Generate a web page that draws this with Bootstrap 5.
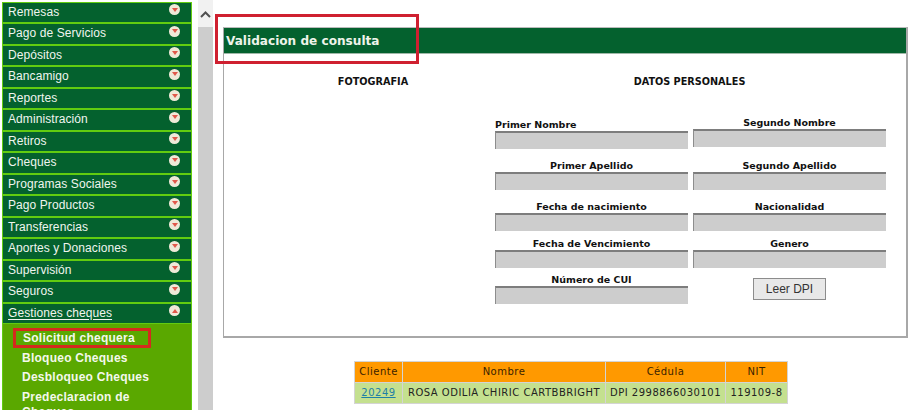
<!DOCTYPE html>
<html lang="es">
<head>
<meta charset="utf-8">
<title>Validacion de consulta</title>
<link rel="stylesheet" href="https://cdn.jsdelivr.net/npm/bootstrap@5.3.0/dist/css/bootstrap.min.css">
<style>
html,body{height:410px;overflow:hidden;background:#fff}
body{position:relative;font-family:"Liberation Sans",Arial,sans-serif}
.side-menu{width:190px;height:410px;margin-left:2px;flex:none;overflow:hidden;padding-top:1.5px}
.side-item{height:21.5px;background:#04612e;border:1px solid #62cc10;color:#f0f5ee;font-size:12px;line-height:19.5px;padding-left:5px;padding-right:11px;letter-spacing:.08px;text-decoration:none}
.side-item u{text-underline-offset:2px}
.side-dot{width:11px;height:11px;border-radius:50%;background:#efe9d8;flex:none;margin-top:1.5px;display:flex;align-items:center;justify-content:center}
.side-sub{background:#5aa800;border:1px solid #62cc10;border-top:0;padding:7px 0 0 19px;height:100px}
.side-sub a{display:block;color:#f4f8ec;font-weight:700;font-size:12px;line-height:14.5px;padding-bottom:5.2px;letter-spacing:.25px;text-decoration:none;width:135px}
.side-sub a:first-child{padding-left:1px}
.scroll-track{width:15px;height:410px;margin-left:6px;background:#cdcdcd;flex:none}
.scroll-cap{height:27px;background:#f1f1f1;display:flex;justify-content:center;padding-top:11px}
.work{margin-left:10px;width:685px;flex:none;padding-top:27px}
.panel-box{border:1px solid #a8a8a8;border-top-color:#bbb;height:311px;border-width:1px 2px 2px 1px}
.panel-head{height:26px;background:#04612e;color:#eef4ea;font:700 12.1px/27px "DejaVu Sans",Verdana,sans-serif;padding-left:2px;border-bottom:1px solid #9fb8a8}
.panel-body-wrap{padding-left:271px}
.col-title{font:700 9.7px/11px "DejaVu Sans",Verdana,sans-serif;color:#111;text-align:center}
.title-row{height:22px;padding-top:22px;box-sizing:content-box;margin-left:-271px}
.title-photo{width:298px}
.title-data{width:335px}
.field-grid{display:grid;grid-template-columns:193px 193px;column-gap:5px;margin-top:21px}
.field-cell{text-align:center}
.field-cell label{display:block;font:700 9.5px/11px "DejaVu Sans",Verdana,sans-serif;color:#111;margin:0 0 1px}
.field-in{display:block;width:193px;height:18px;background:#cdcdcd;border:0;border-top:2px solid #7d7d7d;border-left:1px solid #8d8d8d;border-radius:0;padding:0}
.rowgap{margin-bottom:11px}
.rowgap-a{margin-bottom:7px}
.rowgap-b{margin-bottom:6px}
.up2{margin-top:-2px}
.lead-left{text-align:left}
.dpi-btn{display:block;width:73px;height:22px;margin:4px 0 0 60px;padding:0;background:#e8e8e8;border:1px solid #8c8c8c;border-radius:0;font:12px/20px "Liberation Sans",Arial,sans-serif;color:#333}
.data-tbl{width:434px;margin:23px 0 0 131px;border-collapse:separate;border-spacing:1px;font:10px/1 "DejaVu Sans",Verdana,sans-serif;background:#d4d4d4;color:#222;table-layout:fixed}
.data-tbl th{background:#ff9900;font-weight:400;text-align:center;height:20px;padding:0;color:#3a2200;letter-spacing:.5px}
.data-tbl td{background:#c4e08f;height:20px;padding:0;text-align:center;letter-spacing:.5px}
.data-tbl a{color:#1f7fa6}
.mark-box{position:absolute;border:3px solid #cf2030;pointer-events:none}
.mark-a{left:215px;top:14px;width:204px;height:50px}
.mark-b{left:13px;top:328px;width:138px;height:20px;border-color:#d42a1e}
</style>
</head>
<body>
<div class="d-flex">
  <nav class="side-menu">
    <a class="side-item d-flex justify-content-between" href="#">Remesas<span class="side-dot"><svg width="6" height="4"><path d="M0 0h6L3 4z" fill="#e0584a"/></svg></span></a>
    <a class="side-item d-flex justify-content-between" href="#">Pago de Servicios<span class="side-dot"><svg width="6" height="4"><path d="M0 0h6L3 4z" fill="#e0584a"/></svg></span></a>
    <a class="side-item d-flex justify-content-between" href="#">Depósitos<span class="side-dot"><svg width="6" height="4"><path d="M0 0h6L3 4z" fill="#e0584a"/></svg></span></a>
    <a class="side-item d-flex justify-content-between" href="#">Bancamigo<span class="side-dot"><svg width="6" height="4"><path d="M0 0h6L3 4z" fill="#e0584a"/></svg></span></a>
    <a class="side-item d-flex justify-content-between" href="#">Reportes<span class="side-dot"><svg width="6" height="4"><path d="M0 0h6L3 4z" fill="#e0584a"/></svg></span></a>
    <a class="side-item d-flex justify-content-between" href="#">Administración<span class="side-dot"><svg width="6" height="4"><path d="M0 0h6L3 4z" fill="#e0584a"/></svg></span></a>
    <a class="side-item d-flex justify-content-between" href="#">Retiros<span class="side-dot"><svg width="6" height="4"><path d="M0 0h6L3 4z" fill="#e0584a"/></svg></span></a>
    <a class="side-item d-flex justify-content-between" href="#">Cheques<span class="side-dot"><svg width="6" height="4"><path d="M0 0h6L3 4z" fill="#e0584a"/></svg></span></a>
    <a class="side-item d-flex justify-content-between" href="#">Programas Sociales<span class="side-dot"><svg width="6" height="4"><path d="M0 0h6L3 4z" fill="#e0584a"/></svg></span></a>
    <a class="side-item d-flex justify-content-between" href="#">Pago Productos<span class="side-dot"><svg width="6" height="4"><path d="M0 0h6L3 4z" fill="#e0584a"/></svg></span></a>
    <a class="side-item d-flex justify-content-between" href="#">Transferencias<span class="side-dot"><svg width="6" height="4"><path d="M0 0h6L3 4z" fill="#e0584a"/></svg></span></a>
    <a class="side-item d-flex justify-content-between" href="#">Aportes y Donaciones<span class="side-dot"><svg width="6" height="4"><path d="M0 0h6L3 4z" fill="#e0584a"/></svg></span></a>
    <a class="side-item d-flex justify-content-between" href="#">Supervisión<span class="side-dot"><svg width="6" height="4"><path d="M0 0h6L3 4z" fill="#e0584a"/></svg></span></a>
    <a class="side-item d-flex justify-content-between" href="#">Seguros<span class="side-dot"><svg width="6" height="4"><path d="M0 0h6L3 4z" fill="#e0584a"/></svg></span></a>
    <a class="side-item d-flex justify-content-between" href="#"><u>Gestiones cheques</u><span class="side-dot"><svg width="6" height="4"><path d="M0 4h6L3 0z" fill="#e0584a"/></svg></span></a>
    <div class="side-sub">
      <a href="#">Solicitud chequera</a>
      <a href="#">Bloqueo Cheques</a>
      <a href="#">Desbloqueo Cheques</a>
      <a href="#">Predeclaracion de Cheques</a>
    </div>
  </nav>
  <div class="scroll-track"><div class="scroll-cap"><svg width="11" height="7"><path d="M1 6l4.500-4.500L10 6" fill="none" stroke="#505050" stroke-width="2"/></svg></div></div>
  <main class="work">
    <section class="panel-box">
      <div class="panel-head">Validacion de consulta</div>
      <div class="panel-body-wrap">
        <div class="d-flex title-row">
          <div class="col-title title-photo">FOTOGRAFIA</div>
          <div class="col-title title-data">DATOS PERSONALES</div>
        </div>
        <div class="field-grid">
          <div class="field-cell lead-left rowgap"><label for="f1">Primer Nombre</label><input id="f1" class="field-in" disabled></div>
          <div class="field-cell rowgap up2"><label for="f2">Segundo Nombre</label><input id="f2" class="field-in" disabled></div>
          <div class="field-cell rowgap"><label for="f3">Primer Apellido</label><input id="f3" class="field-in" disabled></div>
          <div class="field-cell rowgap"><label for="f4">Segundo Apellido</label><input id="f4" class="field-in" disabled></div>
          <div class="field-cell rowgap-a"><label for="f5">Fecha de nacimiento</label><input id="f5" class="field-in" disabled></div>
          <div class="field-cell rowgap-a"><label for="f6">Nacionalidad</label><input id="f6" class="field-in" disabled></div>
          <div class="field-cell rowgap-b"><label for="f7">Fecha de Vencimiento</label><input id="f7" class="field-in" disabled></div>
          <div class="field-cell rowgap-b"><label for="f8">Genero</label><input id="f8" class="field-in" disabled></div>
          <div class="field-cell"><label for="f9">Número de CUI</label><input id="f9" class="field-in" disabled></div>
          <div class="field-cell"><button type="button" class="btn dpi-btn">Leer DPI</button></div>
        </div>
      </div>
    </section>
    <table class="data-tbl">
      <colgroup><col style="width:47px"><col style="width:202px"><col style="width:119px"><col style="width:61px"></colgroup>
      <thead><tr><th>Cliente</th><th>Nombre</th><th>Cédula</th><th>NIT</th></tr></thead>
      <tbody><tr><td><a href="#">20249</a></td><td>ROSA ODILIA CHIRIC CARTBBRIGHT</td><td>DPI 2998866030101</td><td>119109-8</td></tr></tbody>
    </table>
  </main>
</div>
<div class="mark-box mark-a"></div>
<div class="mark-box mark-b"></div>
<script src="https://cdn.jsdelivr.net/npm/bootstrap@5.3.0/dist/js/bootstrap.bundle.min.js"></script>
</body>
</html>
